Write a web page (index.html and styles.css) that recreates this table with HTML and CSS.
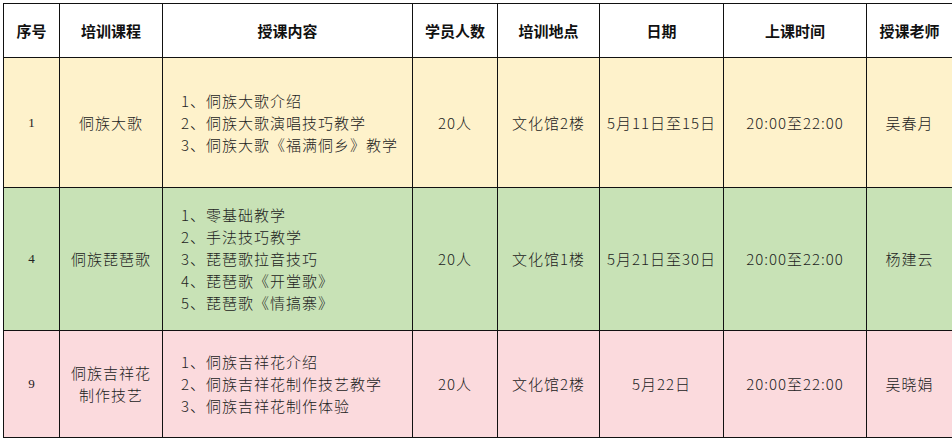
FILE: index.html
```html
<!DOCTYPE html>
<html lang="zh-CN">
<head>
<meta charset="utf-8">
<title>培训课程表</title>
<link rel="stylesheet" href="styles.css">
</head>
<body>
<div class="sheet">
  <div class="cell head">序号</div>
  <div class="cell head">培训课程</div>
  <div class="cell head">授课内容</div>
  <div class="cell head">学员人数</div>
  <div class="cell head">培训地点</div>
  <div class="cell head">日期</div>
  <div class="cell head">上课时间</div>
  <div class="cell head">授课老师</div>

  <div class="cell yellow num">1</div>
  <div class="cell yellow">侗族大歌</div>
  <div class="cell yellow list">1、侗族大歌介绍<br>2、侗族大歌演唱技巧教学<br>3、侗族大歌《福满侗乡》教学</div>
  <div class="cell yellow">20人</div>
  <div class="cell yellow">文化馆2楼</div>
  <div class="cell yellow">5月11日至15日</div>
  <div class="cell yellow">20:00至22:00</div>
  <div class="cell yellow">吴春月</div>

  <div class="cell green num">4</div>
  <div class="cell green">侗族琵琶歌</div>
  <div class="cell green list">1、零基础教学<br>2、手法技巧教学<br>3、琵琶歌拉音技巧<br>4、琵琶歌《开堂歌》<br>5、琵琶歌《情搞寨》</div>
  <div class="cell green">20人</div>
  <div class="cell green">文化馆1楼</div>
  <div class="cell green">5月21日至30日</div>
  <div class="cell green">20:00至22:00</div>
  <div class="cell green">杨建云</div>

  <div class="cell pink num">9</div>
  <div class="cell pink two">侗族吉祥花<br>制作技艺</div>
  <div class="cell pink list">1、侗族吉祥花介绍<br>2、侗族吉祥花制作技艺教学<br>3、侗族吉祥花制作体验</div>
  <div class="cell pink">20人</div>
  <div class="cell pink">文化馆2楼</div>
  <div class="cell pink">5月22日</div>
  <div class="cell pink">20:00至22:00</div>
  <div class="cell pink">吴晓娟</div>
</div>
</body>
</html>
```
FILE: styles.css
```css
html, body {
  margin: 0;
  padding: 0;
  overflow: hidden;
  background: #ffffff;
}
body {
  padding: 3px 0 0 3px;
  font-family: "Noto Sans CJK SC", "DejaVu Sans", sans-serif;
  color: #222;
}
.sheet {
  display: grid;
  grid-template-columns: 56px 103px 250px 85px 102px 124px 143px 86px;
  grid-template-rows: 54px 130px 143px 107px;
  width: max-content;
  border-left: 1px solid #111;
  border-top: 1px solid #111;
}
.cell {
  box-sizing: border-box;
  border-right: 1px solid #111;
  border-bottom: 1px solid #111;
  display: flex;
  align-items: center;
  justify-content: center;
  text-align: center;
  font-size: 15px;
  letter-spacing: 1px;
  line-height: 22px;
  font-weight: 300;
}
.head {
  font-size: 15px;
  letter-spacing: 0;
  font-weight: 700;
  color: #111;
  background: #ffffff;
}
.yellow { background: #fef2cb; }
.green { background: #c8e2b6; }
.pink { background: #fbdadd; }
.num {
  font-family: "Liberation Serif", "DejaVu Serif", serif;
  font-size: 13px;
  letter-spacing: 0;
}
.list {
  justify-content: flex-start;
  text-align: left;
  padding-left: 18px;
}
```
